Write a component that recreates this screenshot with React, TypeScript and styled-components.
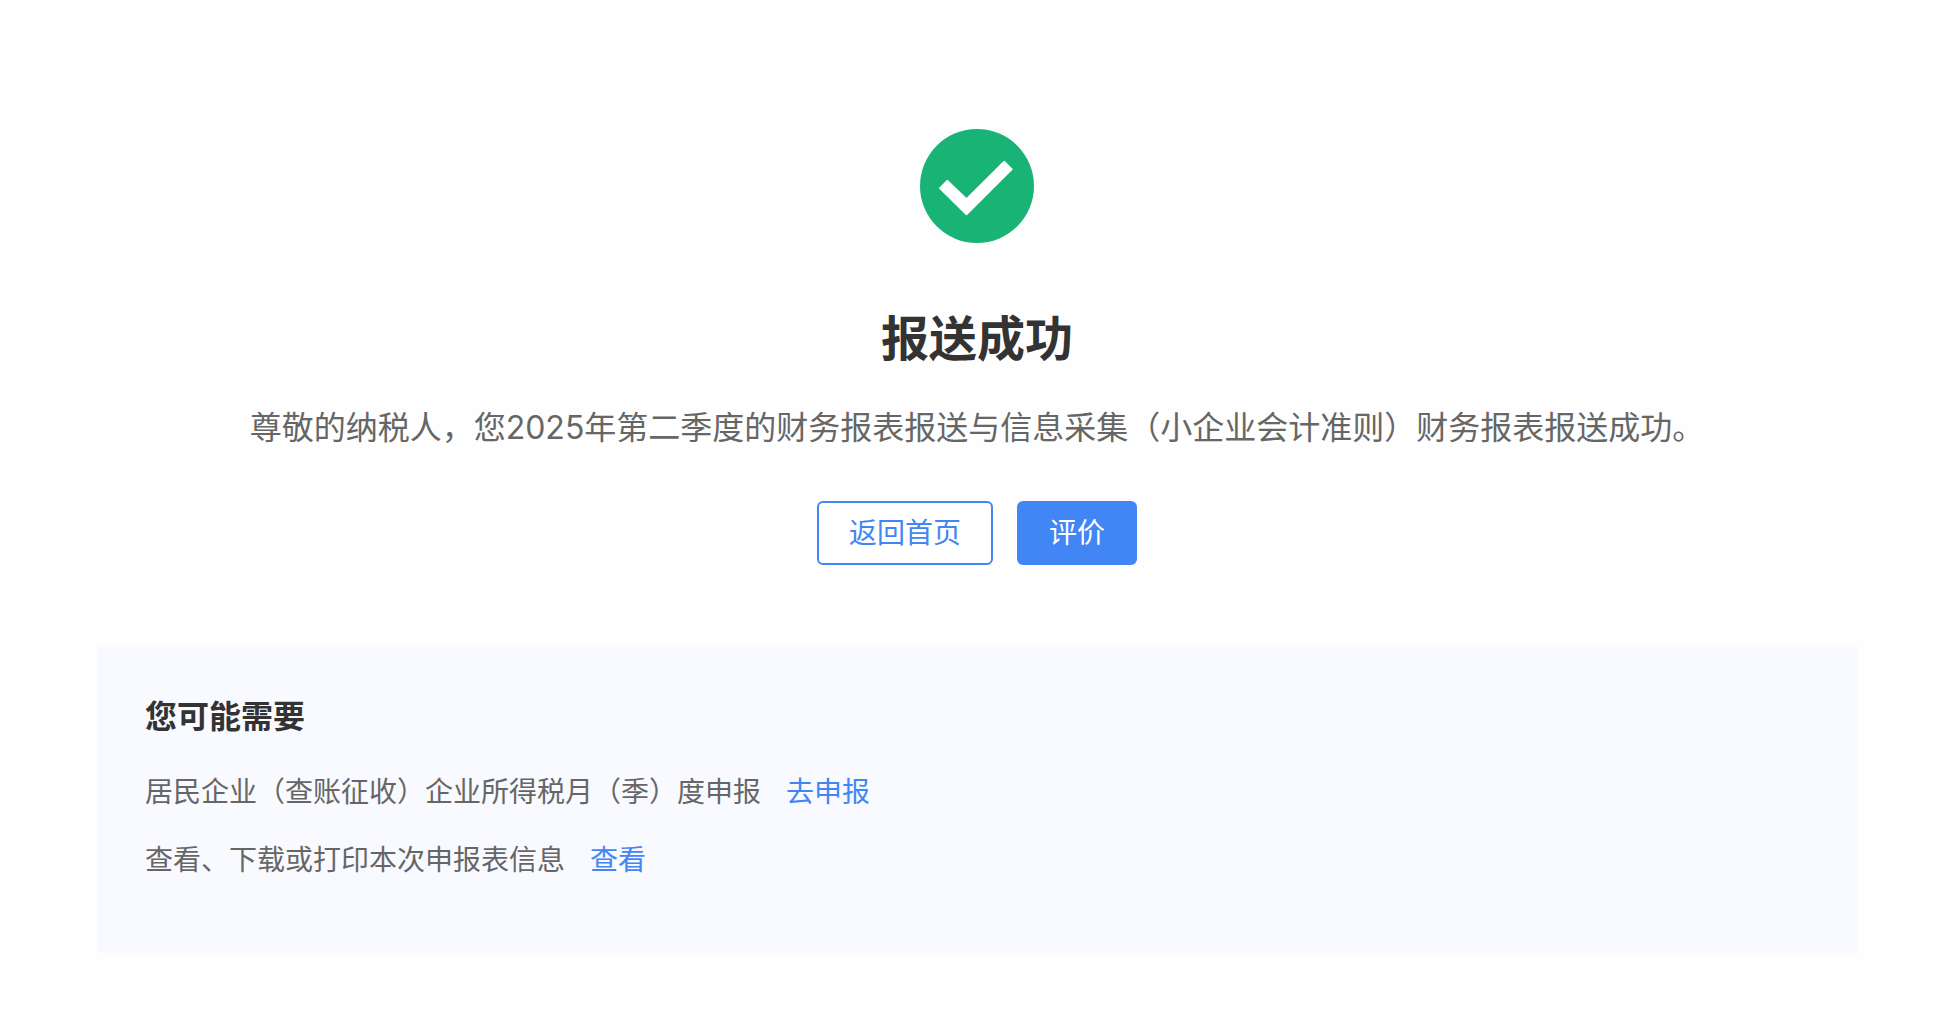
import React from "react";
import styled, { createGlobalStyle } from "styled-components";

const GlobalStyle = createGlobalStyle`
  *, *::before, *::after { box-sizing: border-box; }
  body {
    margin: 0;
    background: #fefefe;
    color: #666;
    font-family: Inter, "Noto Sans CJK SC", sans-serif;
  }
  h1, h2, p, ul { margin: 0; padding: 0; }
`;

const Page = styled.main`
  padding: 128px 99px 64px 97px;
`;

const Result = styled.section`
  display: flex;
  flex-direction: column;
  align-items: center;
  text-align: center;
`;

const SuccessIcon = styled.svg`
  display: block;
  width: 116px;
  height: 116px;
`;

const Title = styled.h1`
  margin-top: 59px;
  font-size: 48px;
  line-height: 72px;
  font-weight: 600;
  color: #333;
`;

const Message = styled.p`
  margin-top: 29px;
  font-size: 32px;
  line-height: 48px;
`;

const Actions = styled.div`
  display: flex;
  gap: 24px;
  margin-top: 49px;
`;

const Button = styled.button<{ $primary?: boolean }>`
  height: 64px;
  padding: 0 30px;
  border: 2px solid #4285f5;
  border-radius: 6px;
  background: ${(p) => (p.$primary ? "#4285f5" : "#fff")};
  color: ${(p) => (p.$primary ? "#fff" : "#4285f5")};
  font-family: inherit;
  font-size: 28px;
  line-height: 40px;
  cursor: pointer;
`;

const Panel = styled.section`
  margin-top: 80px;
  padding: 48px 48px 73px;
  background: #f8faff;
`;

const PanelTitle = styled.h2`
  font-size: 32px;
  line-height: 48px;
  font-weight: 600;
  color: #333;
`;

const Suggestions = styled.ul`
  display: flex;
  flex-direction: column;
  gap: 28px;
  margin-top: 31px;
  list-style: none;
`;

const Suggestion = styled.li`
  display: flex;
  gap: 25px;
  font-size: 28px;
  line-height: 40px;
`;

const Link = styled.a`
  color: #4285f5;
  text-decoration: none;
`;

const suggestions = [
  { text: "居民企业（查账征收）企业所得税月（季）度申报", action: "去申报" },
  { text: "查看、下载或打印本次申报表信息", action: "查看" },
];

export default function App() {
  return (
    <>
      <GlobalStyle />
      <Page lang="zh-CN">
        <Result>
          <SuccessIcon viewBox="0 0 116 116" aria-hidden="true">
            <circle cx="58" cy="58" r="57" fill="#1ab376" />
            <path
              d="M28.2 52.7 20.8 60.2 47.5 86.4 92.9 41.2 85.2 33.6 47.5 71Z"
              fill="#fff"
              stroke="#fff"
              strokeWidth="1.6"
              strokeLinejoin="round"
            />
          </SuccessIcon>
          <Title>报送成功</Title>
          <Message>
            尊敬的纳税人，您2025年第二季度的财务报表报送与信息采集（小企业会计准则）财务报表报送成功。
          </Message>
          <Actions>
            <Button type="button">返回首页</Button>
            <Button type="button" $primary>评价</Button>
          </Actions>
        </Result>
        <Panel>
          <PanelTitle>您可能需要</PanelTitle>
          <Suggestions>
            {suggestions.map((s) => (
              <Suggestion key={s.text}>
                <span>{s.text}</span>
                <Link href="#">{s.action}</Link>
              </Suggestion>
            ))}
          </Suggestions>
        </Panel>
      </Page>
    </>
  );
}
